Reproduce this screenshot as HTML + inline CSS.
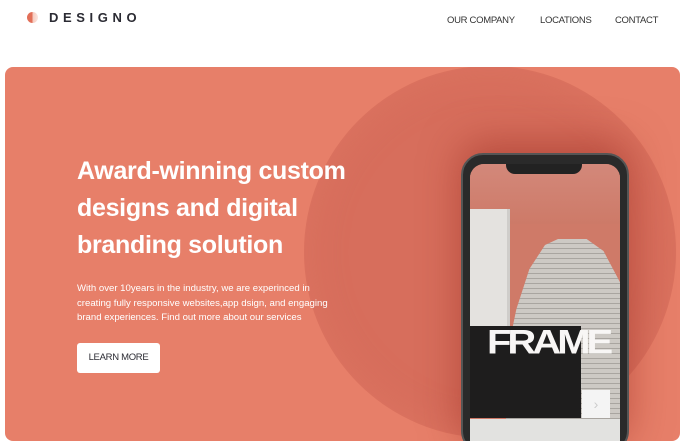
<!DOCTYPE html>
<html><head><meta charset="utf-8"><style>
*{margin:0;padding:0;box-sizing:border-box}
body{width:683px;height:445px;overflow:hidden;background:#fff;font-family:"Liberation Sans",sans-serif;position:relative}
.logo{position:absolute;left:27px;top:12px;width:11px;height:11px;border-radius:50%;background:linear-gradient(90deg,#e26f58 50%,#f6c9bd 50%,#fbe6e0)}
.brand{position:absolute;left:49px;top:10px;font-size:13px;font-weight:bold;letter-spacing:4.6px;color:#2b2b33}
.nav{position:absolute;top:15px;font-size:9.5px;letter-spacing:-0.3px;color:#333}
.card{position:absolute;left:5px;top:67px;width:675px;height:374px;border-radius:8px;background:#e77f69;overflow:hidden}
.circ{position:absolute;left:299px;top:-1px;width:372px;height:372px;border-radius:50%;background:#d76e5c;box-shadow:inset 0 0 40px rgba(231,127,105,.4)}
h1{position:absolute;left:72px;top:86px;font-size:25px;letter-spacing:-0.3px;line-height:37px;color:#fff;font-weight:bold;width:300px}
p{position:absolute;left:72px;top:215px;font-size:9.6px;letter-spacing:0px;line-height:14.6px;color:#fff;width:300px}
.btn{position:absolute;left:72px;top:276px;width:83px;height:30px;background:#fff;border-radius:3px;font-size:9.5px;letter-spacing:-0.3px;color:#2b2b33;text-align:center;line-height:30px}
.phone{position:absolute;left:456px;top:86px;width:168px;height:300px;border-radius:22px;background:#2a2a2a;border:2px solid #555;box-shadow:0 -10px 40px rgba(150,40,30,.5)}
.screen{position:absolute;left:7px;top:9px;width:150px;height:290px;border-radius:14px 14px 0 0;overflow:hidden;background:#cf7a68}
.notch{position:absolute;left:36px;top:0;width:76px;height:10px;background:#222;border-radius:0 0 9px 9px}
</style></head><body>
<div class="logo"></div><div class="brand">DESIGNO</div>
<div class="nav" style="left:447px">OUR COMPANY</div>
<div class="nav" style="left:540px">LOCATIONS</div>
<div class="nav" style="left:615px">CONTACT</div>
<div class="card">
<div class="circ"></div>
<h1>Award-winning custom designs and digital branding solution</h1>
<p>With over 10years in the industry, we are experinced in<br>creating fully responsive websites,app dsign, and engaging<br>brand experiences. Find out more about our services</p>
<div class="btn">LEARN MORE</div>
<div class="phone"><div class="screen">
<div style="position:absolute;left:0;top:0;width:150px;height:60px;background:linear-gradient(#d3887a,#cd7a68)"></div>
<div style="position:absolute;left:0;top:45px;width:40px;height:200px;background:#e4e2df;border-right:3px solid #cfcdca"></div>
<div style="position:absolute;left:36px;top:75px;width:130px;height:200px;background:repeating-linear-gradient(#cdc9c4 0 4px,#a9a5a0 4px 5px);clip-path:polygon(30% 3%,40% 0,62% 0,75% 6%,88% 22%,100% 42%,100% 100%,0 100%,0 60%,8% 35%,18% 15%)"></div>
<div style="position:absolute;left:0;top:162px;width:111px;height:92px;background:#1e1d1d"></div>
<div style="position:absolute;left:17px;top:165px;font-size:40px;font-weight:bold;color:#f8f6f5;letter-spacing:-4px;line-height:32px;transform:scaleY(0.85);transform-origin:top left">FRAME</div>
<div style="position:absolute;left:112px;top:226px;width:28px;height:28px;background:#f4f4f4;color:#ccc;font-size:14px;text-align:center;line-height:28px">›</div>
<div style="position:absolute;left:0;top:255px;width:150px;height:40px;background:#e2e2e0"></div>
<div class="notch"></div>
</div></div>
</div>
</body></html>
